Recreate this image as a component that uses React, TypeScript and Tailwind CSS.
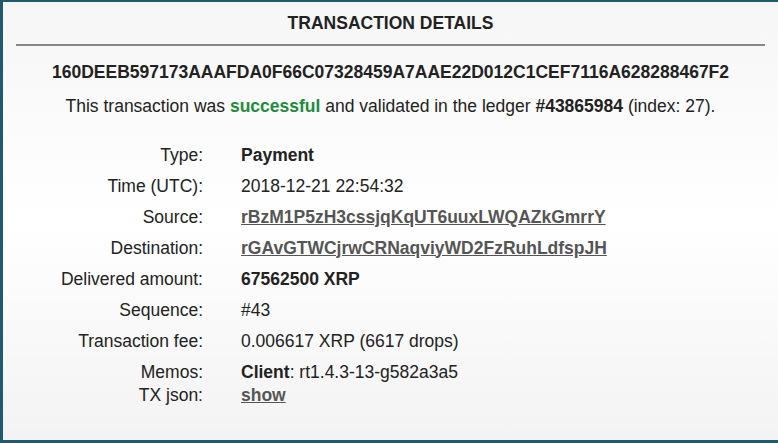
const rows: { label: string; value: React.ReactNode }[] = [
  { label: "Type:", value: <span className="font-bold">Payment</span> },
  { label: "Time (UTC):", value: "2018-12-21 22:54:32" },
  {
    label: "Source:",
    value: (
      <a href="#" className="font-bold text-[#555] underline">
        rBzM1P5zH3cssjqKqUT6uuxLWQAZkGmrrY
      </a>
    ),
  },
  {
    label: "Destination:",
    value: (
      <a href="#" className="font-bold text-[#555] underline">
        rGAvGTWCjrwCRNaqviyWD2FzRuhLdfspJH
      </a>
    ),
  },
  { label: "Delivered amount:", value: <span className="font-bold">67562500 XRP</span> },
  { label: "Sequence:", value: "#43" },
  { label: "Transaction fee:", value: "0.006617 XRP (6617 drops)" },
  {
    label: "Memos:",
    value: (
      <>
        <span className="font-bold">Client</span>: rt1.4.3-13-g582a3a5
      </>
    ),
  },
];

export default function App() {
  return (
    <div className="h-[443px] w-[778px] overflow-hidden bg-[#1f5a6e] pt-[2px] pb-[3px] pl-[3px] font-['Liberation_Sans',Arial,sans-serif] text-[#222]">
      <div className="h-full bg-gradient-to-b from-[#f6f6f6] via-white to-[#f3f3f3]">
        <div className="flex h-[42px] items-center justify-center text-[17.5px] font-bold">
          TRANSACTION DETAILS
        </div>
        <div className="mx-[13px] h-[2px] bg-[#888]" />
        <div className="mt-[16px] text-center text-[17.5px] leading-[20px] font-bold">
          160DEEB597173AAAFDA0F66C07328459A7AAE22D012C1CEF7116A628288467F2
        </div>
        <div className="mt-[14px] text-center text-[17.5px] leading-[20px]">
          This transaction was <span className="font-bold text-[#228b3c]">successful</span> and
          validated in the ledger <span className="font-bold">#43865984</span> (index: 27).
        </div>
        <div className="mt-[23px] text-[17.5px] leading-[20px]">
          {rows.map((r) => (
            <div key={r.label} className="flex h-[31px] items-center">
              <div className="w-[200px] text-right">{r.label}</div>
              <div className="ml-[38px]">{r.value}</div>
            </div>
          ))}
          <div className="-mt-[5px] flex h-[26px] items-center">
            <div className="w-[200px] text-right">TX json:</div>
            <div className="ml-[38px]">
              <a href="#" className="font-bold text-[#555] underline">
                show
              </a>
            </div>
          </div>
        </div>
      </div>
    </div>
  );
}
